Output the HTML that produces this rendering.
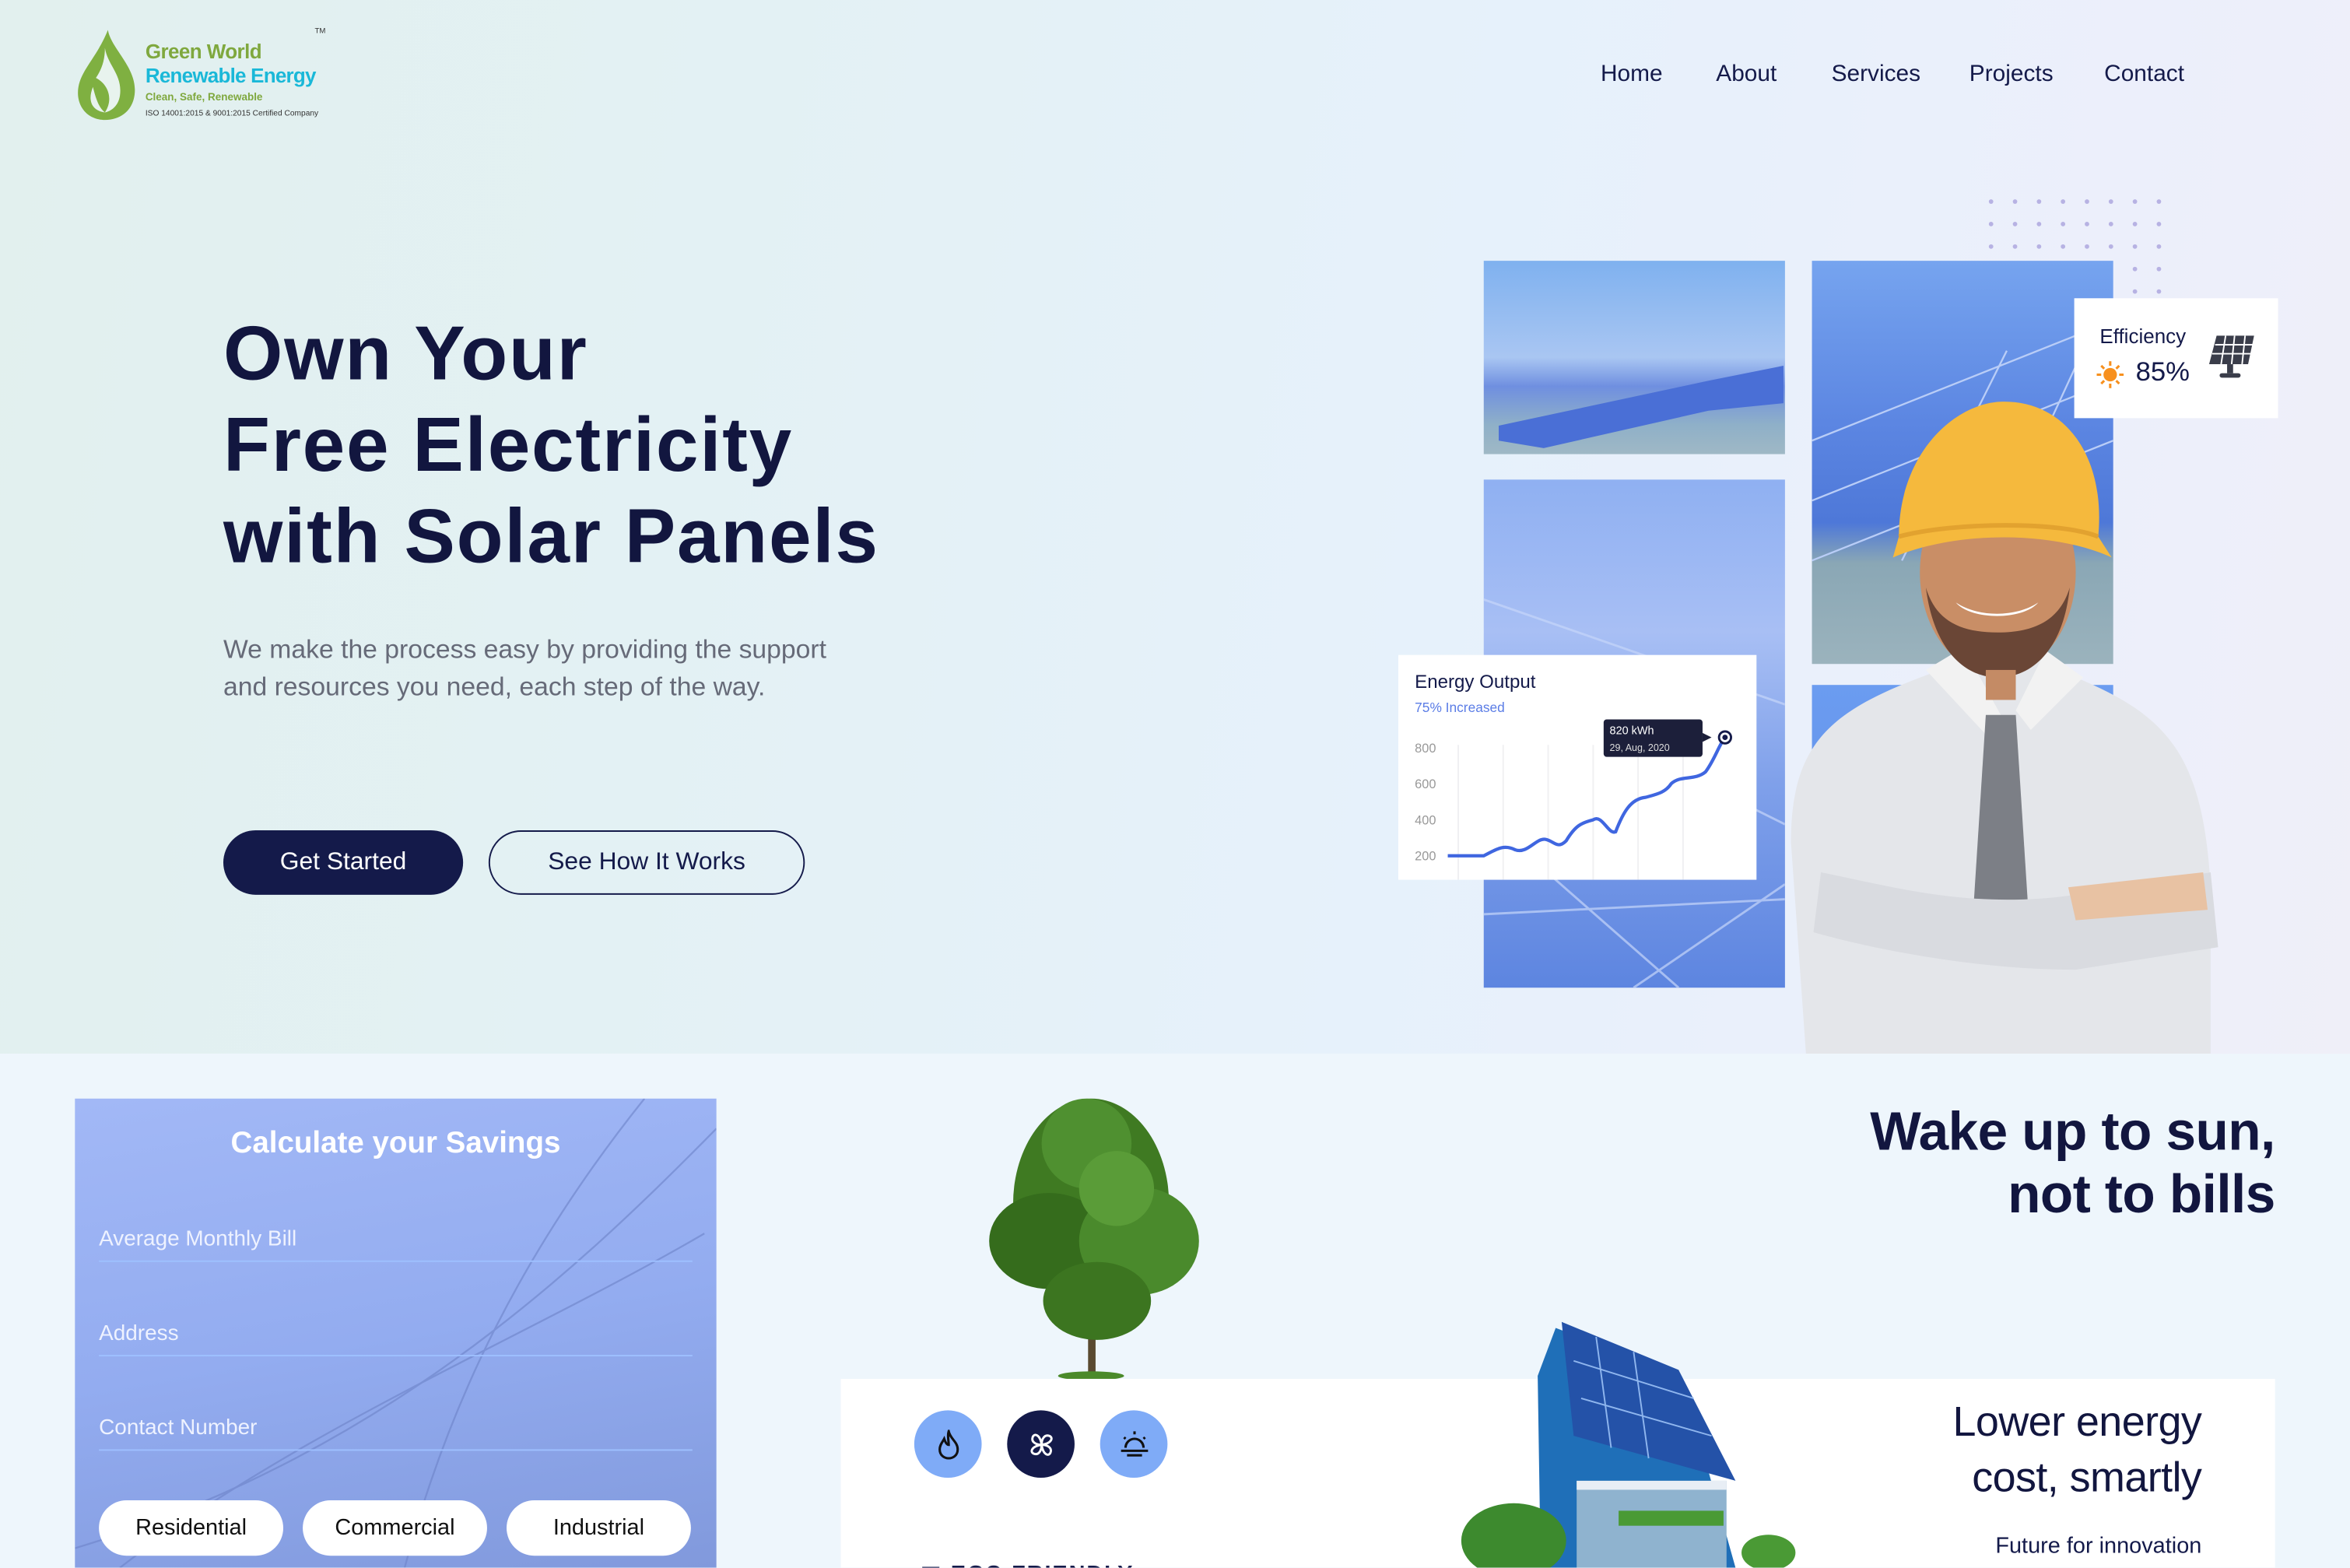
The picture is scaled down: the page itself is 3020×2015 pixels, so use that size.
<!DOCTYPE html>
<html><head><meta charset="utf-8"><style>
*{margin:0;padding:0;box-sizing:border-box}
html,body{width:3020px;height:2014px;overflow:hidden;background:#eef6fc}
#s{position:absolute;left:0;top:0;width:1568px;height:1046px;overflow:hidden;transform:scale(1.92602);transform-origin:0 0;font-family:"Liberation Sans","DejaVu Sans",sans-serif;color:#12163f}
.a{position:absolute}
.hero{left:0;top:0;width:1568px;height:703px;background:linear-gradient(100deg,#e2f0ee 0%,#e3f1f4 30%,#e6f1fb 60%,#eceffb 85%,#efeff8 100%)}
.nav{top:41px;font-size:15.5px;color:#141a4a}
h1{position:absolute;left:149px;top:205px;font-size:51px;line-height:61px;font-weight:bold;color:#12163f;letter-spacing:0.9px}
.p{left:149px;top:421px;font-size:17.5px;line-height:25px;color:#666a78}
.btn{top:554px;height:43px;border-radius:22px;font-size:16.5px;display:flex;align-items:center;justify-content:center}
.img{background:linear-gradient(160deg,#8ab0f0,#5b8ae6);overflow:hidden}
.card{background:#fff}
.dot{width:3px;height:3px;border-radius:50%;background:#b7b2e3;position:absolute}
.lbl{left:66px;font-size:14.5px;color:#eef2ff}
.line{left:66px;width:396px;height:1px;background:#9ec0ff}
.pill{top:1001px;width:123px;height:37px;background:#fff;border-radius:19px;font-size:15px;display:flex;align-items:center;justify-content:center;color:#111}
.ic{top:941px;width:45px;height:45px;border-radius:50%;display:flex;align-items:center;justify-content:center}
</style></head><body><div id="s">
<div class="a hero"></div>
<svg class="a" style="left:50px;top:18px" width="44" height="64" viewBox="0 0 44 64"><path d="M22 2C24 14 40 26 40 42C40 54 32 62 20 62C9 62 2 54 2 44C2 30 14 22 22 2Z" fill="#7fb041"/><path d="M20 14C22 26 32 32 30 46C29 52 25 56 20 57C26 48 22 38 14 34C18 28 20 22 20 14Z" fill="#e8f3ee"/><path d="M12 40C14 48 16 54 20 57C12 56 8 50 12 40Z" fill="#e8f3ee"/></svg>
<div class="a" style="left:97px;top:27px;font-size:13.5px;font-weight:bold;color:#7fa83e;line-height:16px;letter-spacing:-0.3px">Green World</div>
<div class="a" style="left:97px;top:43px;font-size:13.5px;font-weight:bold;color:#1ab8d8;line-height:16px;letter-spacing:-0.4px">Renewable Energy</div>
<div class="a" style="left:97px;top:62px;font-size:7px;font-weight:bold;color:#7fa83e">Clean, Safe, Renewable</div>
<div class="a" style="left:97px;top:73px;font-size:5.3px;color:#333">ISO 14001:2015 &amp; 9001:2015 Certified Company</div>
<div class="a" style="left:210px;top:18px;font-size:5px;color:#333">TM</div>
<div class="a nav" style="left:1068px">Home</div>
<div class="a nav" style="left:1145px">About</div>
<div class="a nav" style="left:1222px">Services</div>
<div class="a nav" style="left:1314px">Projects</div>
<div class="a nav" style="left:1404px">Contact</div>
<h1>Own Your<br>Free Electricity<br>with Solar Panels</h1>
<div class="a p">We make the process easy by providing the support<br>and resources you need, each step of the way.</div>
<div class="a btn" style="left:149px;width:160px;background:#141a4a;color:#fff">Get Started</div>
<div class="a btn" style="left:326px;width:211px;border:1.5px solid #141a4a;color:#141a4a">See How It Works</div>
<div id="dots"></div>
<div class="a img" style="left:990px;top:174px;width:201px;height:129px;background:linear-gradient(180deg,#7fb1ef 0%,#a9c6f2 50%,#6f8fe0 65%,#8fb0c8 85%,#9fb8c5 100%)">
<svg width="201" height="129"><polygon points="10,110 150,80 200,70 200,95 150,100 40,125 10,120" fill="#4a6fd6"/></svg></div>
<div class="a img" style="left:990px;top:320px;width:201px;height:339px;background:linear-gradient(180deg,#8fb0f2 0%,#a8bff4 30%,#7fa0ea 60%,#5d85e0 100%)">
<svg width="201" height="339" stroke="#c6d6fa" stroke-width="1.5" opacity=".7"><line x1="0" y1="80" x2="201" y2="150"/><line x1="0" y1="130" x2="201" y2="230"/><line x1="0" y1="290" x2="201" y2="280"/><line x1="40" y1="260" x2="130" y2="339"/><line x1="100" y1="339" x2="201" y2="270"/></svg></div>
<div class="a img" style="left:1209px;top:174px;width:201px;height:269px;background:linear-gradient(180deg,#76a4ef 0%,#5c86e2 40%,#4e78d8 65%,#8aa7b5 75%,#9bb3bd 100%)">
<svg width="201" height="269" stroke="#b9cdf7" stroke-width="1.2"><line x1="0" y1="120" x2="201" y2="40"/><line x1="0" y1="160" x2="201" y2="80"/><line x1="0" y1="200" x2="201" y2="120"/><line x1="60" y1="200" x2="130" y2="60"/><line x1="130" y1="170" x2="190" y2="40"/></svg></div>
<div class="a img" style="left:1209px;top:457px;width:201px;height:246px;background:linear-gradient(180deg,#6b9cf0,#5a86e4)"></div>
<svg class="a" style="left:1185px;top:262px" width="300" height="441" viewBox="0 0 300 441">
<path d="M20 441 L10 300 C10 230 40 210 110 185 L130 175 L175 175 L200 190 C260 215 285 240 290 330 L290 441 Z" fill="#e4e6ea"/>
<path d="M100 185 L125 170 L150 215 L140 228 Z M180 172 L205 190 L170 225 L160 212Z" fill="#f2f2f2"/>
<path d="M140 215 L160 215 L168 340 L150 360 L132 340 Z" fill="#7c7f86"/>
<path d="M30 320 C80 330 130 345 200 335 L290 320 L295 370 L200 385 C130 385 60 370 25 360Z" fill="#d9dbe0"/>
<path d="M195 330 L285 320 L288 345 L200 352Z" fill="#e8c2a3"/>
<ellipse cx="148" cy="120" rx="52" ry="68" fill="#c98e66"/>
<path d="M100 130 C105 170 125 190 148 190 C172 190 192 170 196 130 C190 150 175 160 148 160 C120 160 106 150 100 130Z" fill="#6a4636"/>
<path d="M120 140 C135 150 160 150 175 140 C165 152 130 152 120 140Z" fill="#fff"/>
<rect x="140" y="185" width="20" height="20" fill="#c48b65"/>
<path d="M82 96 C82 40 120 6 152 6 C195 6 220 45 215 96 L224 110 C185 92 120 92 78 110 Z" fill="#f5b93d"/>
<path d="M82 96 C120 86 190 86 215 96" stroke="#e2a22f" stroke-width="3" fill="none"/>
</svg>
<div class="a card" style="left:1384px;top:199px;width:136px;height:80px"></div>
<div class="a" style="left:1401px;top:217px;font-size:13.5px;color:#141a4a">Efficiency</div>
<div class="a" style="left:1425px;top:238px;font-size:18px;color:#141a4a">85%</div>
<svg class="a" style="left:1399px;top:241px" width="18" height="18" viewBox="0 0 18 18"><circle cx="9" cy="9" r="4.5" fill="#f7901e"/><g stroke="#f7901e" stroke-width="1.6"><line x1="9" y1="0" x2="9" y2="3"/><line x1="9" y1="15" x2="9" y2="18"/><line x1="0" y1="9" x2="3" y2="9"/><line x1="15" y1="9" x2="18" y2="9"/><line x1="3" y1="3" x2="5" y2="5"/><line x1="13" y1="13" x2="15" y2="15"/><line x1="3" y1="15" x2="5" y2="13"/><line x1="13" y1="5" x2="15" y2="3"/></g></svg>
<svg class="a" style="left:1472px;top:221px" width="34" height="34" viewBox="0 0 34 34"><path d="M7 3 L32 3 L28 22 L2 22Z" fill="#3a3d4a"/><g stroke="#fff" stroke-width="1"><line x1="13" y1="3" x2="10" y2="22"/><line x1="19" y1="3" x2="17" y2="22"/><line x1="26" y1="3" x2="24" y2="22"/><line x1="6" y1="9" x2="31" y2="9"/><line x1="4" y1="15" x2="30" y2="15"/></g><rect x="14" y="22" width="4" height="6" fill="#3a3d4a"/><rect x="9" y="28" width="14" height="3" rx="1.5" fill="#3a3d4a"/></svg>
<div class="a card" style="left:933px;top:437px;width:239px;height:150px"></div>
<div class="a" style="left:944px;top:448px;font-size:12.5px;color:#141a4a">Energy Output</div>
<div class="a" style="left:944px;top:467px;font-size:9px;color:#5b7de6">75% Increased</div>
<div class="a" style="left:944px;top:487px;font-size:8.5px;color:#999;line-height:24px">800<br>600<br>400<br>200</div>
<svg class="a" style="left:933px;top:437px" width="239" height="150" viewBox="0 0 239 150">
<g stroke="#f0f0f2" stroke-width="1"><line x1="40" y1="60" x2="40" y2="150"/><line x1="70" y1="60" x2="70" y2="150"/><line x1="100" y1="60" x2="100" y2="150"/><line x1="130" y1="60" x2="130" y2="150"/><line x1="160" y1="60" x2="160" y2="150"/><line x1="190" y1="60" x2="190" y2="150"/></g>
<path d="M33 134 L57 134 C65 130 70 126 78 130 C86 133 92 122 98 123 C104 124 106 130 112 124 C118 114 122 112 130 110 C136 106 140 120 145 118 C150 105 155 96 165 95 C172 93 178 92 182 86 C188 80 198 84 205 78 C211 70 214 60 218 55" stroke="#3f66e0" stroke-width="2.2" fill="none"/>
<circle cx="218" cy="55" r="4" fill="#fff" stroke="#141a4a" stroke-width="1.5"/><circle cx="218" cy="55" r="1.8" fill="#141a4a"/>
<rect x="137" y="43" width="66" height="25" rx="2" fill="#1c1f3a"/><polygon points="203,52 209,55 203,58" fill="#1c1f3a"/>
<text x="141" y="53" font-size="7.5" fill="#fff" font-family="Liberation Sans">820 kWh</text>
<text x="141" y="64" font-size="6.5" fill="#ddd" font-family="Liberation Sans">29, Aug, 2020</text>
</svg>
<div class="a" style="left:50px;top:733px;width:428px;height:313px;background:linear-gradient(170deg,#a2b8f6 0%,#93acf0 50%,#8199dc 100%);overflow:hidden">
<svg width="428" height="313" stroke="#6d83c8" stroke-width="1.2" fill="none" opacity=".6"><path d="M428 20 C330 120 200 240 0 300"/><path d="M420 90 C300 160 150 220 30 313"/><path d="M380 0 C300 100 250 200 220 313"/></svg></div>
<div class="a" style="left:50px;top:752px;width:428px;text-align:center;font-size:20px;font-weight:bold;color:#fff">Calculate your Savings</div>
<div class="a lbl" style="top:819px">Average Monthly Bill</div><div class="a line" style="top:841px"></div>
<div class="a lbl" style="top:882px">Address</div><div class="a line" style="top:904px"></div>
<div class="a lbl" style="top:945px">Contact Number</div><div class="a line" style="top:967px"></div>
<div class="a pill" style="left:66px">Residential</div>
<div class="a pill" style="left:202px">Commercial</div>
<div class="a pill" style="left:338px">Industrial</div>
<svg class="a" style="left:640px;top:728px" width="170" height="194" viewBox="0 0 170 194"><rect x="86" y="120" width="5" height="70" fill="#5a4a30"/><ellipse cx="88" cy="190" rx="22" ry="3" fill="#4b8a2a"/><ellipse cx="88" cy="75" rx="52" ry="70" fill="#3f7a22"/><ellipse cx="60" cy="100" rx="40" ry="32" fill="#356c1c"/><ellipse cx="120" cy="100" rx="40" ry="36" fill="#4a8a2c"/><ellipse cx="92" cy="140" rx="36" ry="26" fill="#3c7520"/><ellipse cx="85" cy="35" rx="30" ry="30" fill="#4f9030"/><ellipse cx="105" cy="65" rx="25" ry="25" fill="#5a9c38"/></svg>
<div class="a" style="right:50px;top:734px;font-size:36px;font-weight:bold;text-align:right;line-height:42px;color:#12163f;letter-spacing:-0.3px">Wake up to sun,<br>not to bills</div>
<div class="a card" style="left:561px;top:920px;width:957px;height:126px"></div>
<div class="a ic" style="left:610px;background:#7fabf7"><svg width="18" height="20" viewBox="0 0 18 20"><path d="M9 1C10 6 15 8 15 13C15 17 12 19 9 19C6 19 3 17 3 13C3 10 5 8 6 6C7 9 8 10 9 10C9 7 8 4 9 1Z" fill="none" stroke="#111" stroke-width="1.6"/></svg></div>
<div class="a ic" style="left:672px;background:#141a4a"><svg width="20" height="20" viewBox="0 0 20 20" fill="none" stroke="#fff" stroke-width="1.5"><path d="M10 10C6 10 3 8 4 5C5 2 9 3 10 10ZM10 10C10 6 12 3 15 4C18 5 17 9 10 10ZM10 10C14 10 17 12 16 15C15 18 11 17 10 10ZM10 10C10 14 8 17 5 16C2 15 3 11 10 10Z"/></svg></div>
<div class="a ic" style="left:734px;background:#7fabf7"><svg width="22" height="20" viewBox="0 0 22 20" fill="none" stroke="#111" stroke-width="1.6"><path d="M5 12A6 6 0 0 1 17 12"/><line x1="2" y1="14" x2="20" y2="14"/><line x1="6" y1="17" x2="16" y2="17"/><line x1="11" y1="1" x2="11" y2="3"/><line x1="4" y1="5" x2="5" y2="6"/><line x1="18" y1="5" x2="17" y2="6"/></svg></div>
<div class="a" style="left:614px;top:1041px;font-size:15px;font-weight:bold;color:#141a4a;letter-spacing:1px">&#9703; ECO FRIENDLY</div>
<svg class="a" style="left:970px;top:878px" width="230" height="168" viewBox="0 0 230 168"><path d="M68 8 L152 40 L188 168 L58 168 L56 40Z" fill="#1f6fb8"/><path d="M72 4 L150 36 L188 110 L80 80Z" fill="#2452a8"/><g stroke="#8fb6ee" stroke-width="1"><line x1="95" y1="14" x2="105" y2="88"/><line x1="120" y1="24" x2="130" y2="95"/><line x1="80" y1="30" x2="160" y2="55"/><line x1="85" y1="55" x2="172" y2="80"/></g><rect x="82" y="110" width="100" height="58" fill="#8fb3cf"/><rect x="82" y="110" width="100" height="6" fill="#e8eef5"/><ellipse cx="40" cy="150" rx="35" ry="25" fill="#3d8a2e"/><ellipse cx="210" cy="158" rx="18" ry="12" fill="#4a9a35"/><rect x="110" y="130" width="70" height="10" fill="#4a9a35"/></svg>
<div class="a" style="right:99px;top:930px;font-size:28px;text-align:right;line-height:37px;color:#12163f;letter-spacing:-0.3px">Lower energy<br>cost, smartly</div>
<div class="a" style="right:99px;top:1023px;font-size:15px;color:#141a4a">Future for innovation</div>
</div>
<script>
var d=document.getElementById('dots'),h='';
for(var r=0;r<4;r++)for(var c=0;c<8;c++){if(r==3&&c<6)continue;h+='<div class="dot" style="left:'+(1327+c*16)+'px;top:'+(133+r*15)+'px"></div>';}
h+='<div class="dot" style="left:1423px;top:193px"></div><div class="dot" style="left:1439px;top:193px"></div>';
d.innerHTML=h;
</script>
</body></html>
